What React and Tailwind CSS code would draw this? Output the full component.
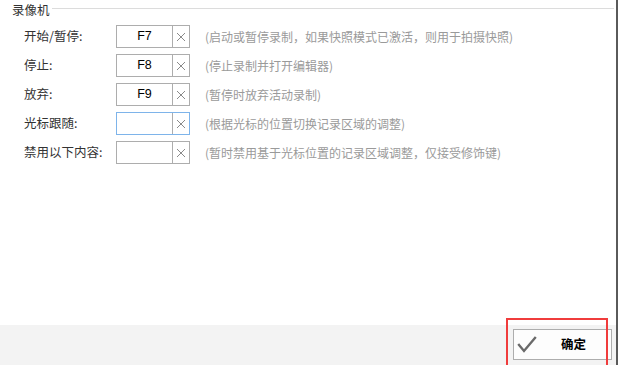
import React from 'react';

const rows = [
    { label: '开始/暂停:', key: 'F7', hint: '(启动或暂停录制，如果快照模式已激活，则用于拍摄快照)' },
    { label: '停止:', key: 'F8', hint: '(停止录制并打开编辑器)' },
    { label: '放弃:', key: 'F9', hint: '(暂停时放弃活动录制)' },
    { label: '光标跟随:', key: '', hint: '(根据光标的位置切换记录区域的调整)', focused: true },
    { label: '禁用以下内容:', key: '', hint: '(暂时禁用基于光标位置的记录区域调整，仅接受修饰键)' },
];

const font = { fontFamily: '"Noto Sans CJK SC", "Liberation Sans", sans-serif' };

const ShortcutRow = ({ label, keyName, hint, focused }) => (
    <div className="flex items-center h-[23px]">
        <div className="w-[116px] shrink-0 pl-[24px] text-[12.5px] text-[#333] whitespace-nowrap">{label}</div>
        <div className={`flex shrink-0 h-[23px] w-[74px] border bg-white ${focused ? 'border-[#7eb4ea]' : 'border-[#adadad]'}`}>
            <div className="flex-1 flex items-center justify-center text-[12.5px] text-black" style={{ fontFamily: '"Liberation Sans", sans-serif' }}>
                {keyName}
            </div>
            <div className="w-[17px] border-l border-[#adadad] flex items-center justify-center">
                <svg width="10" height="10" viewBox="0 0 10 10">
                    <path d="M1 1 L9 9 M9 1 L1 9" stroke="#8a8a8a" strokeWidth="1" fill="none" />
                </svg>
            </div>
        </div>
        <div className="ml-[15px] text-[12px] text-[#9a9a9a] whitespace-nowrap">{hint}</div>
    </div>
);

export default function App() {
    return (
        <div className="relative w-[618px] h-[365px] bg-white flex flex-col border-r-2 border-[#5a5a5a] overflow-hidden" style={font}>
            <div className="flex-1">
                {/* group header */}
                <div className="flex items-center h-[17px] pl-[12px] pr-[2px]">
                    <span className="text-[12.5px] text-[#333] leading-[17px] pt-px">录像机</span>
                    <div className="flex-1 ml-[2px] h-px bg-[#dcdcdc]" />
                </div>
                <div className="flex flex-col gap-[6px] mt-[8px]">
                    {rows.map((r) => (
                        <ShortcutRow key={r.label} label={r.label} keyName={r.key} hint={r.hint} focused={r.focused} />
                    ))}
                </div>
            </div>

            {/* footer */}
            <div className="h-[40px] bg-[#f3f3f3] flex items-start justify-end pt-[4px] pr-[4px]">
                <button className="w-[99px] h-[31px] border border-[#adadad] bg-[#fdfdfd] flex items-center pl-[3px]">
                    <svg width="20" height="18" viewBox="0 0 20 18">
                        <path d="M2 9 L7 15 L18 2" stroke="#6a6a6a" strokeWidth="2.4" fill="none" strokeLinecap="square" />
                    </svg>
                    <span className="ml-[24px] text-[12.5px] font-bold text-black">确定</span>
                </button>
            </div>

            {/* annotation highlight */}
            <div className="absolute left-[506px] top-[318px] w-[102px] h-[52px] border-2 border-[#f03c3c]" />
        </div>
    );
}
